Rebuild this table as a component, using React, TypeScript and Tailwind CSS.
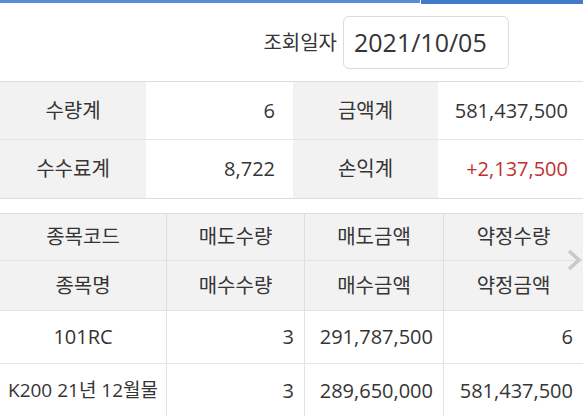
const FONT = { fontFamily: '"Open Sans", "Noto Sans CJK KR", sans-serif' };

type Cell = { text: string; align: 'center' | 'right'; small?: boolean };

const summary = [
  ['수량계', '6', '금액계', '581,437,500'],
  ['수수료계', '8,722', '손익계', '+2,137,500'],
];

const headers = [
  ['종목코드', '매도수량', '매도금액', '약정수량'],
  ['종목명', '매수수량', '매수금액', '약정금액'],
];

const rows: Cell[][] = [
  [
    { text: '101RC', align: 'center' },
    { text: '3', align: 'right' },
    { text: '291,787,500', align: 'right' },
    { text: '6', align: 'right' },
  ],
  [
    { text: 'K200 21년 12월물', align: 'center', small: true },
    { text: '3', align: 'right' },
    { text: '289,650,000', align: 'right' },
    { text: '581,437,500', align: 'right' },
  ],
];

const cols = 'grid grid-cols-[167px_138px_139px_139px]';

export default function App() {
  return (
    <div style={FONT} className="w-[583px] h-[416px] overflow-hidden bg-white text-[#353535]">
      {/* tab underline */}
      <div className="flex h-[4px]">
        <div className="flex-1 h-[3px] bg-[#5b8dd4] border-r border-white" />
        <div className="w-[162px] bg-[#4479c9]" />
      </div>

      {/* date filter */}
      <div className="flex justify-end items-center h-[77px] pr-[74px] gap-[6px]">
        <span className="text-[20px]">조회일자</span>
        <div className="w-[166px] h-[53px] border border-[#dcdcdc] rounded-[6px] flex items-center pl-[10px] text-[25px]">
          2021/10/05
        </div>
      </div>

      {/* summary */}
      <div className="border-t border-[#dedede] border-b">
        {summary.map((r, i) => (
          <div
            key={i}
            className={`grid grid-cols-[146px_147px_145px_145px] h-[58px] ${i === 0 ? 'border-b border-[#e6e6e6]' : ''}`}
          >
            <div className="bg-[#f2f2f2] flex items-center justify-center text-[20px]">{r[0]}</div>
            <div className="flex items-center justify-end pr-[18px] text-[20px]">{r[1]}</div>
            <div className="bg-[#f2f2f2] flex items-center justify-center text-[20px]">{r[2]}</div>
            <div
              className={`flex items-center justify-end pr-[15px] text-[20px] ${i === 1 ? 'text-[#c4302f]' : ''}`}
            >
              {r[3]}
            </div>
          </div>
        ))}
      </div>

      {/* detail */}
      <div className="relative mt-[14px] border-t border-[#dedede]">
        {headers.map((h, i) => (
          <div
            key={i}
            className={`${cols} bg-[#f2f2f2] border-b border-[#e2e2e2] ${i === 0 ? 'h-[47px]' : 'h-[50px]'}`}
          >
            {h.map((t, j) => (
              <div
                key={j}
                className={`flex items-center justify-center text-[20px] ${j < 3 ? 'border-r border-[#dedede]' : ''}`}
              >
                {t}
              </div>
            ))}
          </div>
        ))}
        {rows.map((r, i) => (
          <div key={i} className={`${cols} h-[53px] ${i === 0 ? 'border-b border-[#e6e6e6]' : ''}`}>
            {r.map((c, j) => (
              <div
                key={j}
                className={`flex items-center whitespace-nowrap ${c.align === 'center' ? 'justify-center' : 'justify-end pr-[10px]'} ${
                  c.small ? 'text-[19px]' : 'text-[20px]'
                } ${j < 3 ? 'border-r border-[#e2e2e2]' : ''}`}
              >
                {c.text}
              </div>
            ))}
          </div>
        ))}
        <svg
          className="absolute right-[1px] top-[35px]"
          width="16"
          height="22"
          viewBox="0 0 16 22"
          fill="none"
        >
          <path d="M3 2 L13 11 L3 20" stroke="#c9c9c9" strokeWidth="3.5" strokeLinejoin="miter" />
        </svg>
      </div>
    </div>
  );
}
